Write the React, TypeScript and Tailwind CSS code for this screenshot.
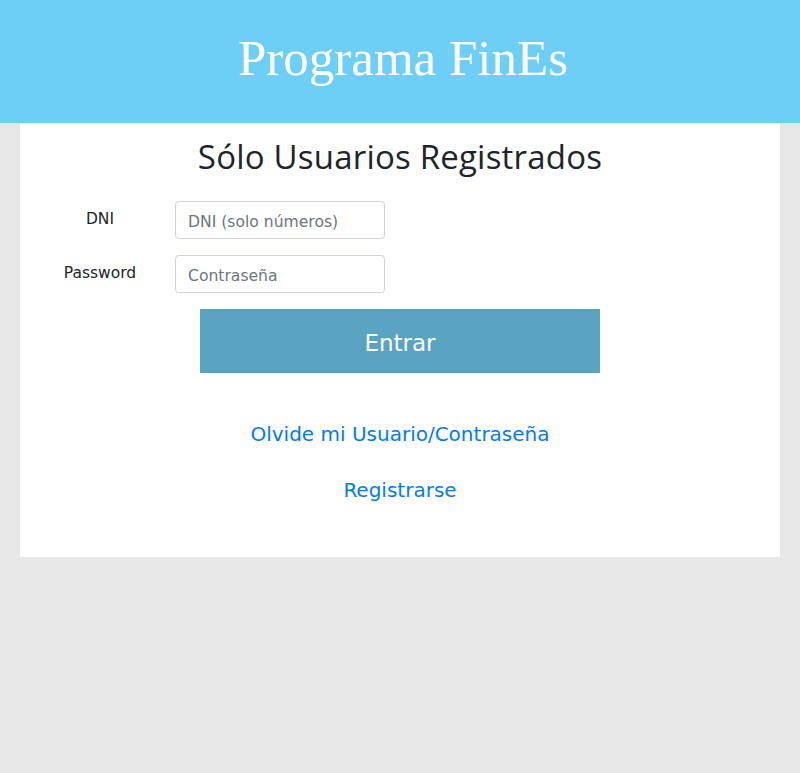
export default function App() {
  return (
    <div className="min-h-[773px] bg-[#e7e7e7]">
      <header className="h-[123px] bg-[#6dcff6] flex items-center justify-center">
        <h1 className="text-white text-[51px] leading-none font-['Liberation_Serif',serif] pb-[6px] pl-[6px]">
          Programa FinEs
        </h1>
      </header>

      <main className="mx-[20px] bg-white h-[434px] pt-[14px]">
        <h2 className="text-center text-[#212529] text-[33px] leading-[40px] tracking-[0.2px] font-['Open_Sans',sans-serif]">
          Sólo Usuarios Registrados
        </h2>

        <form className="mt-[24px] flex flex-col gap-[16px] font-['DejaVu_Sans',sans-serif]">
          <div className="flex items-center">
            <label className="w-[160px] text-center text-[15.5px] text-[#212529]">DNI</label>
            <input
              type="text"
              placeholder="DNI (solo números)"
              className="ml-[-5px] w-[210px] h-[38px] px-[12px] pt-[3px] border border-[#ced4da] rounded-[4px] text-[15.6px] placeholder:text-[#6c757d] outline-none"
            />
          </div>
          <div className="flex items-center">
            <label className="w-[160px] text-center text-[15.5px] text-[#212529]">Password</label>
            <input
              type="password"
              placeholder="Contraseña"
              className="ml-[-5px] w-[210px] h-[38px] px-[12px] pt-[3px] border border-[#ced4da] rounded-[4px] text-[15.6px] placeholder:text-[#6c757d] outline-none"
            />
          </div>
          <button
            type="button"
            className="mx-auto w-[400px] h-[64px] pt-[4px] bg-[#5aa4c1] text-white text-[23px]"
          >
            Entrar
          </button>
        </form>

        <div className="mt-[48px] flex flex-col items-center gap-[30px] font-['DejaVu_Sans',sans-serif] text-[20px] text-[#007bff]">
          <a href="#" className="leading-[26px]">Olvide mi Usuario/Contraseña</a>
          <a href="#" className="leading-[26px]">Registrarse</a>
        </div>
      </main>
    </div>
  );
}
